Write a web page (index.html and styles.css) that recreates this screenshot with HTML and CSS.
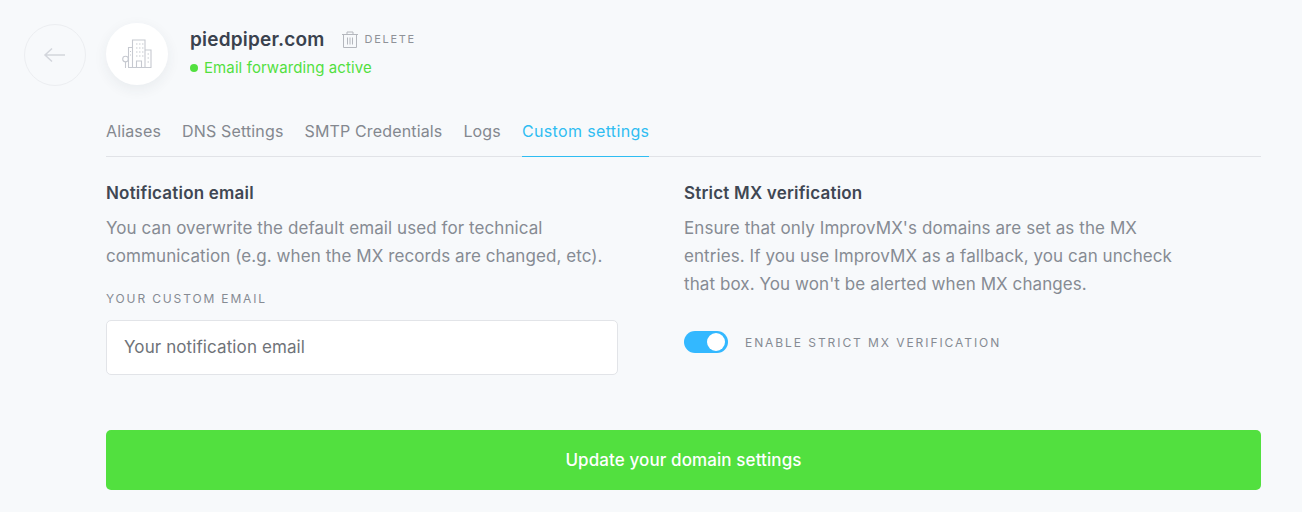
FILE: index.html
```html
<!DOCTYPE html>
<html lang="en">
<head>
  <meta charset="UTF-8">
  <title>piedpiper.com - Custom settings</title>
  <link rel="stylesheet" href="styles.css">
</head>
<body>
  <div class="page">
    <a class="back">
      <svg width="24" height="16" viewBox="0 0 24 16" fill="none" stroke="#d3d6dc" stroke-width="1.5"><path d="M22 8H2M9 1.500 2 8l7 6.500"/></svg>
    </a>
    <div class="content">
      <div class="header">
        <div class="avatar">
          <svg width="30" height="30" viewBox="0 0 30 30" fill="none" stroke="#c6c9d0" stroke-width="1.100"><path d="M6.500 28V8.500h4M10.500 28V1h12.500v27M23 11h6v17M6 28.500h23.500M14 5h1.500M17 5h1.500M20 5h1.500M14 9h1.500M17 9h1.500M20 9h1.500M14 13h1.500M17 13h1.500M20 13h1.500M14 17h1.500M17 17h1.500M20 17h1.500M14.500 28v-6h5v6M25.500 15h1.500M25.500 19h1.500M25.500 23h1.500M8 12.500h1M8 16h1"/><circle cx="3.500" cy="20" r="2.800"/><path d="M3.500 22.800V29"/></svg>
        </div>
        <div class="domain">
          <div class="domain-top">
            <span class="domain-name">piedpiper.com</span>
            <a class="delete">
              <svg width="16" height="17" viewBox="0 0 16 17" fill="none" stroke="#b4b7bd" stroke-width="1"><path d="M0 3.500h16M5 3.500V1h6v2.500M1.500 3.500v13h13v-13M5.500 6.500v7M8 6.500v7M10.500 6.500v7"/></svg>
              DELETE
            </a>
          </div>
          <div class="status"><span class="dot"></span>Email forwarding active</div>
        </div>
      </div>

      <div class="tabs">
        <a class="tab">Aliases</a>
        <a class="tab">DNS Settings</a>
        <a class="tab">SMTP Credentials</a>
        <a class="tab">Logs</a>
        <a class="tab active">Custom settings</a>
      </div>

      <div class="columns">
        <div class="col-left">
          <h3>Notification email</h3>
          <p>You can overwrite the default email used for technical communication (e.g. when the MX records are changed, etc).</p>
          <label class="field-label">YOUR CUSTOM EMAIL</label>
          <input class="field" type="text" placeholder="Your notification email">
        </div>
        <div class="col-right">
          <h3>Strict MX verification</h3>
          <p>Ensure that only ImprovMX's domains are set as the MX entries. If you use ImprovMX as a fallback, you can uncheck that box. You won't be alerted when MX changes.</p>
          <div class="toggle-row">
            <span class="toggle"><span class="knob"></span></span>
            <span class="toggle-label">ENABLE STRICT MX VERIFICATION</span>
          </div>
        </div>
      </div>

      <button class="submit">Update your domain settings</button>
    </div>
  </div>
</body>
</html>
```
FILE: styles.css
```css
body {
  font-family: "Inter", "Liberation Sans", sans-serif;
  margin: 0;
  background-color: #f7f9fb;
  color: #868b93;
}
.page {
  display: flex;
  gap: 20px;
  padding: 23px 41px 0 24px;
}
.back {
  width: 60px;
  height: 60px;
  margin-top: 1px;
  border: 1px solid #eceef1;
  border-radius: 50%;
  display: flex;
  align-items: center;
  justify-content: center;
  flex-shrink: 0;
}
.content {
  flex: 1;
}
.header {
  display: flex;
  gap: 22px;
  height: 62px;
}
.avatar {
  width: 62px;
  height: 62px;
  border-radius: 50%;
  background: white;
  box-shadow: 0 4px 14px rgba(40, 50, 70, 0.07);
  display: flex;
  align-items: center;
  justify-content: center;
}
.domain-top {
  display: flex;
  align-items: center;
  gap: 17px;
  height: 32px;
}
.domain-name {
  font-size: 19px;
  font-weight: 600;
  color: #3a424e;
  letter-spacing: 0.2px;
}
.delete {
  display: flex;
  align-items: center;
  gap: 7px;
  font-size: 11px;
  letter-spacing: 1.7px;
  color: #8f9298;
}
.status {
  display: flex;
  align-items: center;
  font-size: 15px;
  line-height: 18px;
  color: #52e03f;
  margin-top: 4px;
  letter-spacing: 0.1px;
}
.dot {
  width: 8px;
  height: 8px;
  border-radius: 50%;
  background: #52e03f;
  margin-right: 6px;
}
.tabs {
  display: flex;
  gap: 21px;
  margin-top: 23px;
  border-bottom: 1px solid #e1e3e7;
}
.tab {
  font-size: 16px;
  line-height: 20px;
  padding: 13px 0 15px;
  margin-bottom: -1px;
  color: #84888f;
  letter-spacing: 0.15px;
}
.tab.active {
  color: #2fbdf2;
  border-bottom: 1px solid #2fbdf2;
  letter-spacing: 0.35px;
}
.columns {
  display: flex;
  gap: 66px;
  margin-top: 25px;
}
.col-left {
  width: 512px;
}
.col-right {
  width: 500px;
}
h3 {
  margin: 0;
  font-size: 17px;
  line-height: 22px;
  font-weight: 600;
  color: #3f4753;
  letter-spacing: 0.2px;
}
p {
  margin: 10px 0 0;
  font-size: 17px;
  line-height: 28px;
  color: #868b93;
  letter-spacing: 0.08px;
}
.field-label {
  display: block;
  margin-top: 21px;
  font-size: 12px;
  line-height: 16px;
  letter-spacing: 1.85px;
  color: #868b93;
}
.field {
  display: block;
  box-sizing: border-box;
  width: 100%;
  height: 55px;
  margin-top: 13px;
  padding: 0 17px 1px;
  background: white;
  border: 1px solid #e2e4e8;
  border-radius: 5px;
  font-family: inherit;
  font-size: 17px;
  letter-spacing: 0.1px;
}
.field::placeholder {
  color: #6f7379;
  opacity: 1;
}
.toggle-row {
  display: flex;
  align-items: center;
  gap: 17px;
  margin-top: 33px;
}
.toggle {
  width: 44px;
  height: 22px;
  border-radius: 11px;
  background: #33b8ff;
  display: flex;
  justify-content: flex-end;
  align-items: center;
  padding-right: 3px;
  box-sizing: border-box;
}
.knob {
  width: 18px;
  height: 18px;
  border-radius: 50%;
  background: white;
}
.toggle-label {
  font-size: 12px;
  letter-spacing: 1.93px;
  color: #868b93;
}
.submit {
  display: block;
  width: 100%;
  height: 60px;
  margin-top: 55px;
  border: none;
  border-radius: 5px;
  background-color: #52e03f;
  color: white;
  font-family: inherit;
  font-size: 17px;
  font-weight: 500;
  letter-spacing: 0.1px;
}
```
